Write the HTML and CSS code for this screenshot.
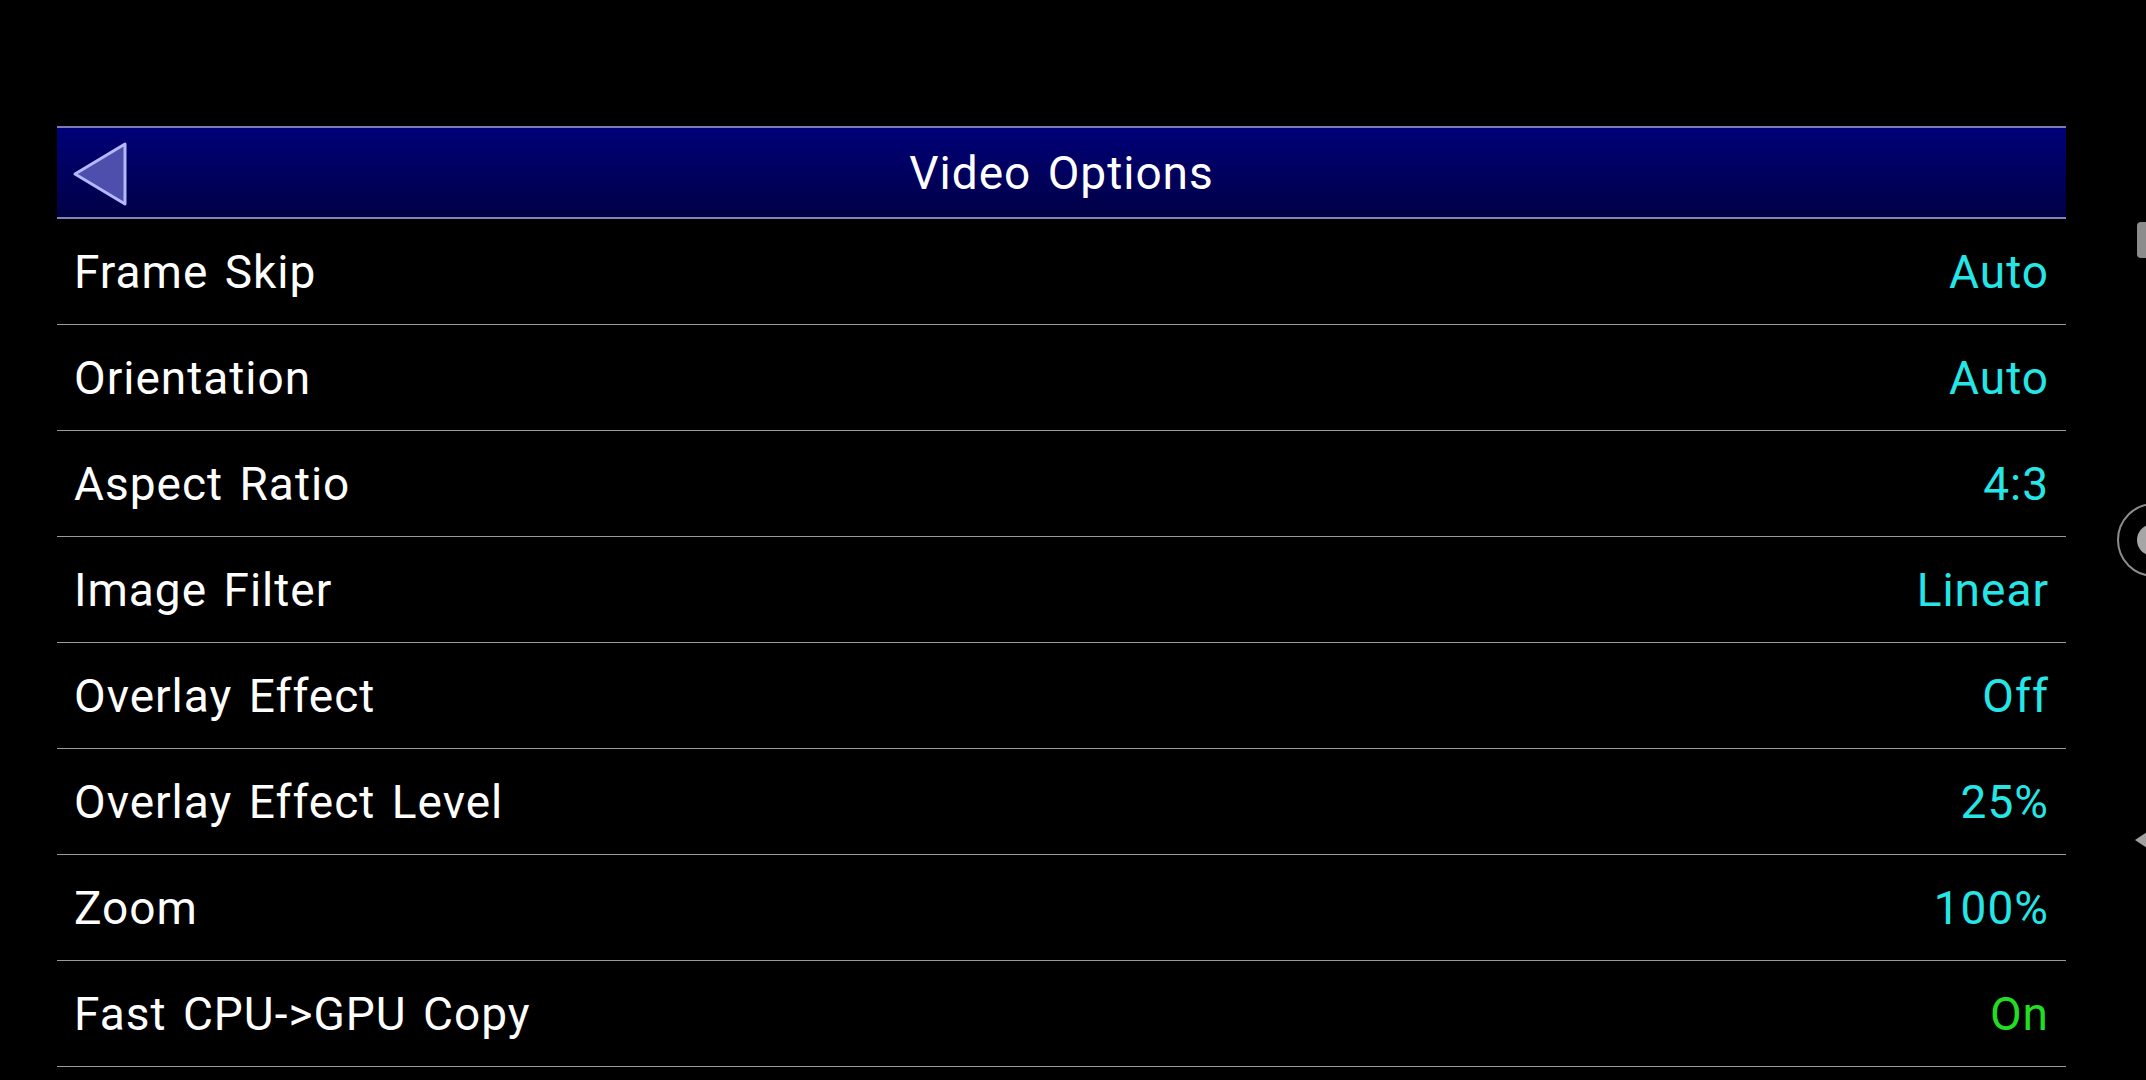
FILE: index.html
```html
<!DOCTYPE html>
<html lang="en">
<head>
    <meta charset="UTF-8">
    <title>Video Options</title>
    <link rel="stylesheet" href="styles.css">
</head>
<body>
    <div class="panel">
        <!-- Title bar -->
        <div class="titlebar">
            <button class="back" aria-label="Back">
                <svg width="58" height="66" viewBox="0 0 58 66">
                    <polygon points="54,3 54,63 4,33" fill="#4e4eac" stroke="#b4b8ff" stroke-width="3" stroke-linejoin="round"/>
                </svg>
            </button>
            <h1>Video Options</h1>
        </div>

        <!-- Option list -->
        <ul class="options">
            <li><span class="name">Frame Skip</span><span class="value">Auto</span></li>
            <li><span class="name">Orientation</span><span class="value">Auto</span></li>
            <li><span class="name">Aspect Ratio</span><span class="value">4:3</span></li>
            <li><span class="name">Image Filter</span><span class="value">Linear</span></li>
            <li><span class="name">Overlay Effect</span><span class="value">Off</span></li>
            <li><span class="name">Overlay Effect Level</span><span class="value">25%</span></li>
            <li><span class="name">Zoom</span><span class="value">100%</span></li>
            <li><span class="name">Fast CPU-&gt;GPU Copy</span><span class="value on">On</span></li>
        </ul>
    </div>

    <!-- Floating edge controls -->
    <div class="edge-handle"></div>
    <div class="edge-ring"><div class="edge-dot"></div></div>
    <div class="edge-arrow"></div>
</body>
</html>
```

FILE: styles.css
```css
/* Dark settings screen */
body {
    margin: 0;
    background-color: #000000;
    color: #ffffff;
    font-family: Roboto, 'Noto Sans', sans-serif;
    overflow: hidden;
    height: 1080px;
}

.panel {
    margin-left: 57px;
    padding-top: 126px;
    width: 2009px;
}

.titlebar {
    position: relative;
    display: flex;
    align-items: center;
    justify-content: center;
    height: 89px;
    border-top: 2px solid #7c7cae;
    border-bottom: 2px solid #8484b4;
    background: linear-gradient(to bottom, #000078, #000046);
}

.titlebar h1 {
    margin: 0;
    font-size: 46px;
    font-weight: 400;
    letter-spacing: 1px;
    word-spacing: 4px;
}

.back {
    position: absolute;
    left: 14px;
    top: 13px;
    padding: 0;
    border: none;
    background: none;
    cursor: pointer;
}

.back svg {
    display: block;
}

.options {
    list-style: none;
    margin: 0;
    padding: 0;
}

.options li {
    display: flex;
    align-items: center;
    justify-content: space-between;
    height: 105px;
    padding: 0 17px 0 17px;
    border-bottom: 1px solid #9a9a9a;
    font-size: 46px;
    letter-spacing: 1px;
}

.name {
    word-spacing: 4px;
}

.value {
    color: #25e6e6;
}

.value.on {
    color: #22dd22;
}

.edge-handle {
    position: absolute;
    left: 2137px;
    top: 222px;
    width: 16px;
    height: 36px;
    border-radius: 4px;
    background-color: #8c8c8c;
}

.edge-ring {
    position: absolute;
    left: 2117px;
    top: 503px;
    width: 70px;
    height: 70px;
    border: 2px solid #8c8c8c;
    border-radius: 50%;
}

.edge-dot {
    position: absolute;
    left: 18px;
    top: 19px;
    width: 32px;
    height: 32px;
    border-radius: 50%;
    background-color: #a6a6a6;
}

.edge-arrow {
    position: absolute;
    left: 2135px;
    top: 832px;
    width: 0;
    height: 0;
    border-top: 8px solid transparent;
    border-bottom: 8px solid transparent;
    border-right: 12px solid #a0a0a0;
}
```
